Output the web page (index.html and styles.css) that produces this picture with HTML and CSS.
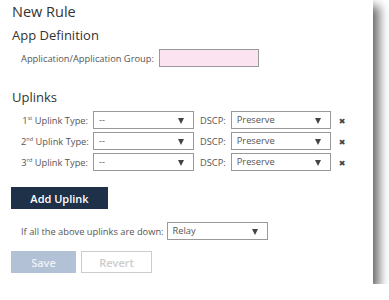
FILE: index.html
```html
<!DOCTYPE html>
<html>
<head>
<meta charset="utf-8">
<link rel="stylesheet" href="styles.css">
</head>
<body>
<div class="panel">
  <h1 class="title">New Rule</h1>
  <h2 class="section">App Definition</h2>
  <div class="app-row">
    <span class="label">Application/Application Group:</span>
    <div class="pink-input"></div>
  </div>
  <h2 class="section uplinks-title">Uplinks</h2>
  <div class="uplinks">
    <div class="uplink-row">
      <span class="label type-label">1<sup>st</sup> Uplink Type:</span>
      <div class="select sel-type"><span>--</span><i class="caret"></i></div>
      <span class="label dscp-label">DSCP:</span>
      <div class="select sel-dscp"><span>Preserve</span><i class="caret"></i></div>
      <span class="remove">&#x2716;</span>
    </div>
    <div class="uplink-row">
      <span class="label type-label">2<sup>nd</sup> Uplink Type:</span>
      <div class="select sel-type"><span>--</span><i class="caret"></i></div>
      <span class="label dscp-label">DSCP:</span>
      <div class="select sel-dscp"><span>Preserve</span><i class="caret"></i></div>
      <span class="remove">&#x2716;</span>
    </div>
    <div class="uplink-row">
      <span class="label type-label">3<sup>rd</sup> Uplink Type:</span>
      <div class="select sel-type"><span>--</span><i class="caret"></i></div>
      <span class="label dscp-label">DSCP:</span>
      <div class="select sel-dscp"><span>Preserve</span><i class="caret"></i></div>
      <span class="remove">&#x2716;</span>
    </div>
  </div>
  <button class="btn-add">Add Uplink</button>
  <div class="down-row">
    <span class="label">If all the above uplinks are down:</span>
    <div class="select sel-relay"><span>Relay</span><i class="caret"></i></div>
  </div>
  <div class="actions">
    <button class="btn-save">Save</button>
    <button class="btn-revert">Revert</button>
  </div>
</div>
</body>
</html>
```
FILE: styles.css
```css
html, body {
  margin: 0;
  padding: 0;
  background: #fff;
}
body {
  font-family: "Open Sans", "DejaVu Sans", sans-serif;
  color: #333;
}
.panel {
  width: 373px;
  height: 284px;
  box-sizing: border-box;
  padding: 1px 0 0 12px;
  background: #fff;
  box-shadow: 6px 6px 10px rgba(0, 0, 0, 0.6);
}
.title {
  margin: 0;
  font-size: 14.5px;
  line-height: 22px;
  font-weight: 400;
  color: #333;
}
.section {
  margin: 2px 0 0 0;
  font-size: 13px;
  line-height: 20px;
  font-weight: 400;
  color: #333;
}
.label {
  font-size: 9.3px;
  color: #555;
  white-space: nowrap;
}
.label sup {
  font-size: 5.5px;
  line-height: 0;
  vertical-align: 4px;
}
.app-row {
  display: flex;
  align-items: center;
  gap: 5px;
  margin: 4px 0 0 9px;
}
.pink-input {
  width: 98px;
  height: 16px;
  border: 1px solid #999;
  background: #fbe3ef;
}
.uplinks-title {
  margin-top: 20px;
}
.uplinks {
  display: flex;
  flex-direction: column;
  gap: 3px;
  margin: 4px 0 0 9px;
}
.uplink-row {
  display: flex;
  align-items: center;
}
.type-label {
  width: 67px;
  text-align: right;
  margin-right: 5px;
}
.select {
  position: relative;
  box-sizing: border-box;
  height: 18px;
  border: 1px solid #999;
  background: #fff;
  font-size: 9.3px;
  color: #555;
  padding-left: 5px;
  line-height: 16px;
}
.caret {
  position: absolute;
  right: 9px;
  top: 6px;
  width: 0;
  height: 0;
  border-left: 3.5px solid transparent;
  border-right: 3.5px solid transparent;
  border-top: 6px solid #444;
}
.sel-type {
  width: 101px;
}
.dscp-label {
  margin-left: 6px;
  margin-right: 5px;
}
.sel-dscp {
  width: 100px;
}
.remove {
  margin-left: 8px;
  font-size: 8px;
  color: #444;
}
.btn-add {
  display: block;
  margin: 16px 0 0 -1px;
  width: 97px;
  height: 22px;
  border: 0;
  background: #1f3049;
  color: #fff;
  font-family: "Open Sans", sans-serif;
  font-size: 11px;
  font-weight: 600;
  padding: 0;
}
.down-row {
  display: flex;
  align-items: center;
  gap: 3px;
  margin: 13px 0 0 9px;
}
.sel-relay {
  width: 101px;
}
.actions {
  display: flex;
  gap: 5px;
  margin: 11px 0 0 -1px;
}
.btn-save, .btn-revert {
  height: 22px;
  padding: 0;
  font-family: "Open Sans", sans-serif;
  font-size: 11px;
  font-weight: 600;
}
.btn-save {
  width: 65px;
  border: 0;
  background: #b2c1d6;
  color: #eef2f7;
}
.btn-revert {
  width: 71px;
  border: 1px solid #ccc;
  background: #fff;
  color: #ccc;
}
```
